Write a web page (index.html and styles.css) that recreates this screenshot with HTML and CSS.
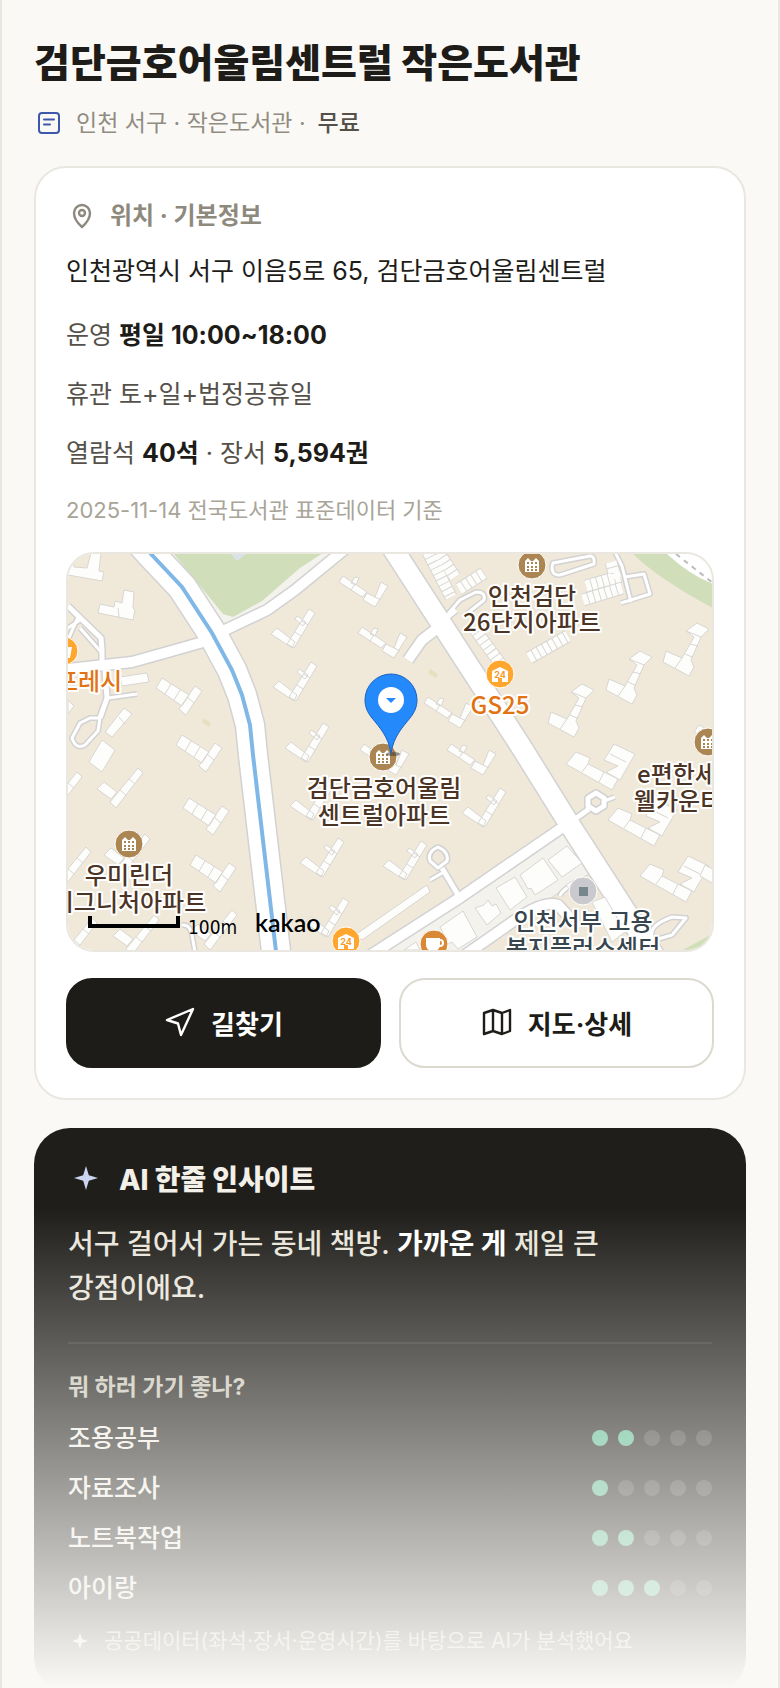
FILE: index.html
```
<!DOCTYPE html>
<html lang="ko">
<head>
    <meta charset="UTF-8">
    <meta name="viewport" content="width=device-width, initial-scale=1.0">
    <title>검단금호어울림센트럴 작은도서관</title>
    <link rel="stylesheet" href="styles.css">
</head>
<body>
    <main class="page">
        <header class="page-head">
            <h1>검단금호어울림센트럴 작은도서관</h1>
            <p class="sub">
                <svg class="icon-doc" viewBox="0 0 30 30" aria-hidden="true">
                    <rect x="5" y="5" width="20" height="20" rx="3"/>
                    <path d="M10 11.5H20M10 16.5H16"/>
                </svg>
                <span>인천 서구 · 작은도서관 · </span>
                <strong>무료</strong>
            </p>
        </header>

        <section class="card">
            <h2 class="card-title">
                <svg class="icon" viewBox="0 0 32 32" aria-hidden="true">
                    <path d="M16 27C12 23.5 8 18.5 8 13A8 8 0 0 1 24 13C24 18.5 20 23.5 16 27Z"/>
                    <circle cx="16" cy="13" r="3"/>
                </svg>
                위치 · 기본정보
            </h2>
            <p class="address">인천광역시 서구 이음5로 65, 검단금호어울림센트럴</p>
            <div class="info">
                <p>운영 <strong>평일 10:00~18:00</strong></p>
                <p>휴관 토+일+법정공휴일</p>
                <p>열람석 <strong>40석</strong> · 장서 <strong>5,594권</strong></p>
            </div>
            <p class="source">2025-11-14 전국도서관 표준데이터 기준</p>

            <div class="map">
                <svg viewBox="68 554 644 396" preserveAspectRatio="xMidYMid slice" role="img" aria-label="지도">
                    <defs>
                        <g id="apt-a">
                            <path d="M6 0L33 17L26 28L0 10ZM39 8L46 13L30 37L23 31Z"/>
                            <path d="M15 6L9 16M24 12L18 22M38 25L31 19"/>
                        </g>
                        <g id="apt-b">
                            <path d="M24 10L26 7L35 13L32 17ZM6 19L24 33L21 39L0 25ZM38 0L44 4L23 39L16 35Z"/>
                            <path d="M31 12L37 16M24 23L30 27"/>
                        </g>
                        <g id="apt-c">
                            <path d="M16 1L20 2L17 9L12 7ZM4 0L28 16L23 21L0 6ZM42 6L49 10L36 31L24 24L28 17L36 21Z"/>
                            <path d="M16 8L12 14M36 21L42 24"/>
                        </g>
                        <g id="apt-d">
                            <path d="M3 28L19 35L31 14L23 8L34 0L46 6L38 14L28 37L31 44L26 53L0 39Z"/>
                            <path d="M23 8L38 14M27 21L35 23M22 31L29 34M19 35L12 45"/>
                        </g>
                        <g id="apt-e">
                            <path d="M48 -8L69 2L54 28L40 20L52 14L38 8ZM10 0L24 6L22 12L38 20L52 27L46 38L0 12Z"/>
                            <path d="M22 12L16 20M38 20L33 30M44 2L60 10"/>
                        </g>
                        <g id="apt-f">
                            <path d="M7 14L20 24L14 31L0 21ZM41 0L46 5L19 40L13 34Z"/>
                            <path d="M32 11L38 16M23 22L29 27"/>
                        </g>
                        <g id="poi-apt">
                            <circle r="14" fill="#ab8552" stroke="#fff"/>
                            <path fill="#fff" d="M-7 7V-4L-4 -7L-1 -4H1L4 -7L7 -4V7Z"/>
                            <path stroke="#ab8552" stroke-width="2" stroke-dasharray="2 2" d="M-5 -2H6M-5 2H6M-5 5H6"/>
                        </g>
                        <g id="poi-store">
                            <circle r="14" fill="#ffa62e" stroke="#fff"/>
                            <path fill="#fff" d="M-8 -3L0 -7L8 -3V8H2V4H-2V8H-8Z"/>
                            <text class="store-no" y="4">24</text>
                        </g>

                        <g id="roads">
                            <path class="w28" d="M140 542L150 553L182 587L212 633L232 670L242 695L250 725L253 755L277 960"/>
                            <path class="w20" d="M384 535L397 555L520 745L568 822L657 960"/>
                            <path class="w10" d="M225 630L267 610L295 590L345 549M203 642L175 650L132 662L60 670"/>
                            <path class="w10" d="M566 825L461 897L366 958"/>
                            <path class="w10" d="M435 630L422 640L408 660M458 960L518 918Q545 900 558 905L570 918"/>
                            <path class="w5" d="M102 670V650L101 638L68 606M105 670L107 698L100 718M458 895L442 868M571 822L589 809M446 618L456 610"/>
                            <path class="w3" d="M68 628L80 620M78 617L68 640M80 628L102 653M108 698L137 694M430 880L444 872M604 801L615 797"/>
                            <path class="w3" d="M100 718H90L80 723L72 738Q76 750 85 745L98 731ZM448 614L460 600L476 592Q486 592 484 600L464 616M553 563L590 556Q595 556 594 564L560 575Q552 576 552 567ZM614 550L622 566L631 602M625 577L644 574L650 594L621 603M652 935Q650 925 672 917L686 918L672 935L655 940M182 925Q190 924 192 935L195 952M560 896Q562 888 584 880"/>
                            <path class="w5" d="M596 793L604 798V806L596 811L588 806V798Z"/>
                            <path class="w3" d="M438 847Q449 852 447 861L438 868L430 861Q427 852 438 847Z"/>
                        </g>
                    </defs>

                    <rect x="68" y="554" width="644" height="396" fill="#f0e9da"/>

                    <!-- green areas -->
                    <path fill="#f3f2ec" d="M170 553L223 622L230 622L266 604L333 553Z"/>
                    <path fill="#d0deba" d="M173 553L223 614L233 617L262 601L300 568L323 553Z"/>
                    <path fill="#dbe3ea" d="M230 553L237 561L247 553Z"/>
                    <path fill="#d0deba" d="M633 554H668L713 583V608Q660 580 633 554Z"/>
                    <path fill="#fff" d="M667 554H713V584Q690 575 667 554Z"/>
                    <path fill="none" stroke="#bbb" stroke-width="2" stroke-dasharray="5 5" d="M676 554L713 583"/>
                    <path fill="#d0deba" d="M683 950L712 934V950Z"/>
                    <path fill="#f4f2ec" stroke="#d8d6d0" d="M563 833L592 872L560 892L530 912L470 956H380Z"/>

                    <!-- roads: casing first, then surface -->
                    <use href="#roads" class="road-edge"/>
                    <use href="#roads" class="road"/>
                    <path class="river" d="M150 553L182 587L212 633L232 670L242 695L250 725L253 755L277 960"/>

                    <!-- buildings -->
                    <g class="buildings">
                        <path d="M91 553H101L99 571L104 572L102 581L68 575V563L73 564L74 567L87 568Z"/>
                        <path d="M124 590L134 592L133 608L135 610L133 620L98 613L100 604L114 607L115 601L122 603ZM118 608L119 617"/>
                        <path d="M120 677L147 673L149 682L122 686ZM124 708L132 714L112 737L105 732ZM119 717L125 724"/>
                        <path d="M102 740L115 750L102 772L89 762ZM68 700L74 706L68 714Z"/>
                        <use href="#apt-a" x="156" y="678"/>
                        <use href="#apt-a" x="176" y="735"/>
                        <use href="#apt-a" x="183" y="798"/>
                        <use href="#apt-a" x="190" y="855"/>
                        <use href="#apt-f" x="97" y="768"/>
                        <use href="#apt-f" x="36" y="772"/>
                        <use href="#apt-f" x="104" y="834"/>
                        <use href="#apt-f" x="45" y="847"/>
                        <use href="#apt-f" x="113" y="915"/>
                        <use href="#apt-f" x="51" y="918"/>
                        <use href="#apt-f" x="191" y="910"/>
                        <use href="#apt-b" x="271" y="609"/>
                        <use href="#apt-b" x="273" y="662"/>
                        <use href="#apt-b" x="285" y="723"/>
                        <use href="#apt-b" x="290" y="781"/>
                        <use href="#apt-b" x="300" y="838"/>
                        <use href="#apt-b" x="305" y="898"/>
                        <use href="#apt-b" x="462" y="788"/>
                        <use href="#apt-b" x="383" y="841"/>
                        <use href="#apt-c" x="339" y="576"/>
                        <use href="#apt-c" x="358" y="627"/>
                        <use href="#apt-c" x="424" y="697"/>
                        <use href="#apt-c" x="447" y="744"/>
                        <use href="#apt-c" x="360" y="744"/>
                        <use href="#apt-d" x="548" y="684"/>
                        <use href="#apt-d" x="606" y="651"/>
                        <use href="#apt-d" x="663" y="623"/>
                        <use href="#apt-e" x="566" y="752"/>
                        <use href="#apt-e" x="608" y="808"/>
                        <use href="#apt-e" x="640" y="864"/>
                        <path d="M699 725L712 732V742L694 732ZM705 865L714 870V884L700 876Z"/>
                        <path d="M548 860L567 846L582 863L562 877ZM520 875L543 858L558 880L535 895L531 888L528 889ZM496 888L515 877L527 897L510 910Z"/>
                        <path d="M475 908L484 905L488 900L492 906L496 904L501 913L487 925ZM440 927L463 911L477 937L458 949L452 942L448 944ZM404 950L416 942L420 950Z"/>
                        <path d="M355 935L427 885L430 892L362 940ZM592 902L605 897L625 932L612 942ZM566 885L574 880L590 898L582 905Z"/>
                    </g>

                    <!-- row houses -->
                    <g class="row-edge">
                        <path id="rows" d="M428 552L451 597M439 553L455 577M459 589L484 573M474 628L502 666M529 658L568 636M583 600L622 588M586 586L621 576M611 562L616 580"/>
                    </g>
                    <use href="#rows" class="row"/>
                    <path fill="#e8dfbf" d="M204 718L211 723L209 727L202 722ZM430 669L438 674L436 678L428 673Z"/>

                    <!-- places -->
                    <use href="#poi-apt" x="532" y="565"/>
                    <use href="#poi-apt" x="708" y="742"/>
                    <use href="#poi-apt" x="383" y="757"/>
                    <use href="#poi-apt" x="129" y="844"/>
                    <use href="#poi-store" x="500" y="674"/>
                    <use href="#poi-store" x="346" y="941"/>
                    <circle cx="64" cy="651" r="14" fill="#ffa62e" stroke="#fff"/>
                    <path fill="#fff" d="M62 647H72L70 658H62Z"/>
                    <circle cx="434" cy="944" r="14" fill="#d98835" stroke="#fff"/>
                    <path fill="#fff" d="M426 938H440V944Q440 951 433 951Q426 951 426 944Z"/>
                    <circle cx="440" cy="943" r="3" fill="none" stroke="#fff" stroke-width="2"/>
                    <circle cx="583" cy="891" r="14" fill="#c9c9ce" stroke="#fff"/>
                    <rect x="579" y="887" width="9" height="9" fill="#76868c"/>

                    <g class="label">
                        <text x="532" y="605">인천검단</text>
                        <text x="532" y="631">26단지아파트</text>
                        <text x="384" y="797">검단금호어울림</text>
                        <text x="384" y="824">센트럴아파트</text>
                        <text x="129" y="884">우미린더</text>
                        <text x="129" y="911">시그니처아파트</text>
                        <text x="688" y="783">e편한세상</text>
                        <text x="678" y="810">웰카운티</text>
                        <text class="orange" x="500" y="714">GS25</text>
                        <text class="orange" x="89" y="690">프레시</text>
                        <text class="slate" x="583" y="930">인천서부 고용</text>
                        <text class="slate" x="583" y="957">복지플러스센터</text>
                    </g>

                    <!-- current library pin -->
                    <ellipse cx="393" cy="754" rx="7" ry="2" fill="#333" opacity="0.5"/>
                    <path fill="#2489fb" stroke="#1b62c4" d="M391 753C388 736 380 728 372 718C367 712 365 706 365 700A26 26 0 0 1 417 700C417 706 415 712 410 718C402 728 394 736 391 753Z"/>
                    <circle cx="391" cy="700" r="13" fill="#fff"/>
                    <path fill="#2489fb" d="M386 698H396L391 703Z"/>

                    <path fill="none" stroke="#000" stroke-width="4" d="M90 916V926H178V916"/>
                    <text class="scale" x="188" y="934">100m</text>
                    <text class="brand" x="255" y="932">kakao</text>
                </svg>
            </div>

            <div class="actions">
                <button type="button" class="btn btn-dark">
                    <svg class="icon" viewBox="0 0 32 32" aria-hidden="true">
                        <path d="M29 3L17 29L14 17.5L3 14Z"/>
                    </svg>
                    길찾기
                </button>
                <button type="button" class="btn">
                    <svg class="icon" viewBox="0 0 32 32" aria-hidden="true">
                        <path d="M3 7L12 4L21 7L29 4V25L21 28L12 25L3 28ZM12 4V25M21 7V28"/>
                    </svg>
                    지도·상세
                </button>
            </div>
        </section>

        <section class="insight">
            <h2 class="insight-title">
                <svg viewBox="0 0 36 36" aria-hidden="true">
                    <path d="M18 4L20.8 13.2L30 16L20.8 18.8L18 28L15.2 18.8L6 16L15.2 13.2Z"/>
                </svg>
                AI 한줄 인사이트
            </h2>
            <p class="insight-text">서구 걸어서 가는 동네 책방. <strong>가까운 게</strong> 제일 큰 강점이에요.</p>

            <div class="scores">
                <h3>뭐 하러 가기 좋나?</h3>
                <ul>
                    <li>조용공부 <span class="dots"><i class="on"></i><i class="on"></i><i></i><i></i><i></i></span></li>
                    <li>자료조사 <span class="dots"><i class="on"></i><i></i><i></i><i></i><i></i></span></li>
                    <li>노트북작업 <span class="dots"><i class="on"></i><i class="on"></i><i></i><i></i><i></i></span></li>
                    <li>아이랑 <span class="dots"><i class="on"></i><i class="on"></i><i class="on"></i><i></i><i></i></span></li>
                </ul>
            </div>

            <p class="insight-foot">
                <svg viewBox="0 0 24 24" aria-hidden="true">
                    <path d="M12 4L14 10L20 12L14 14L12 20L10 14L4 12L10 10Z"/>
                </svg>
                공공데이터(좌석·장서·운영시간)를 바탕으로 AI가 분석했어요
            </p>
        </section>
        <div class="fade"></div>
    </main>
</body>
</html>
```

FILE: styles.css
```
* {
    box-sizing: border-box;
    margin: 0;
    padding: 0;
}

body {
    background: #faf9f6;
    color: #1d1c18;
    font-family: 'Inter', 'Noto Sans CJK KR', sans-serif;
    font-size: 25px;
    line-height: 36px;
    word-break: keep-all;
}

.page {
    position: relative;
    height: 100vh;
    overflow: hidden;
    padding: 37px 32px 0;
    border-left: 2px solid #e9e7e0;
    border-right: 2px solid #e9e7e0;
}

h1 {
    font-size: 39px;
    line-height: 52px;
    font-weight: 800;
}

.sub {
    display: flex;
    align-items: center;
    gap: 12px;
    margin: 16px 0 25px;
    font-size: 23px;
    color: #918c81;
}

.sub strong {
    font-weight: 500;
    color: #55514a;
}

.icon-doc {
    width: 30px;
    height: 30px;
    fill: none;
    stroke: #3d58ab;
    stroke-width: 2;
    stroke-linecap: round;
}

.icon {
    width: 32px;
    height: 32px;
    fill: none;
    stroke: currentColor;
    stroke-width: 2.4;
    stroke-linejoin: round;
    stroke-linecap: round;
}

/* location card */
.card {
    padding: 30px;
    background: #fff;
    border: 2px solid #e9e7e0;
    border-radius: 32px;
}

.card-title {
    display: flex;
    align-items: center;
    gap: 12px;
    font-size: 24px;
    font-weight: 700;
    color: #8e897d;
}

.address {
    margin: 17px 0 26px;
    font-size: 25px;
    line-height: 40px;
}

.info {
    display: flex;
    flex-direction: column;
    gap: 23px;
    color: #55514a;
}

.info strong {
    font-weight: 700;
    color: #1d1c18;
}

.source {
    margin: 21px 0 24px;
    font-size: 22px;
    color: #a8a498;
}

/* map */
.map {
    overflow: hidden;
    border: 2px solid #e9e7e0;
    border-radius: 28px;
}

.map svg {
    display: block;
    width: 100%;
    height: 396px;
}

.road-edge,
.road {
    fill: none;
    stroke: #fff;
    stroke-linejoin: round;
    --casing: 0px;
}

.road-edge {
    stroke: #d2d2d2;
    --casing: 3px;
}

.w28 { stroke-width: calc(28px + var(--casing)); }
.w20 { stroke-width: calc(20px + var(--casing)); }
.w10 { stroke-width: calc(10px + var(--casing)); }
.w5 { stroke-width: calc(5px + var(--casing)); }
.w3 { stroke-width: calc(3px + var(--casing)); }

.river {
    fill: none;
    stroke: #7fb8e6;
    stroke-width: 4;
}

.buildings {
    fill: #fdfdfb;
    stroke: #d8d6d2;
}

.row-edge {
    fill: none;
    stroke: #d8d6d2;
    stroke-width: 13;
}

.row {
    fill: none;
    stroke: #fdfdfb;
    stroke-width: 11;
    stroke-dasharray: 5 1;
}

.label text {
    font-family: 'Noto Sans CJK KR', sans-serif;
    font-size: 24px;
    font-weight: 500;
    text-anchor: middle;
    fill: #4c3424;
    stroke: #fff;
    stroke-width: 4;
    stroke-linejoin: round;
    paint-order: stroke;
}

.label .orange {
    fill: #e27312;
}

.label .slate {
    fill: #37454e;
}

.store-no {
    font-size: 9px;
    font-weight: 700;
    text-anchor: middle;
    fill: #f39b24;
}

.scale {
    font-family: 'DejaVu Sans Condensed', 'DejaVu Sans', sans-serif;
    font-size: 19px;
}

.brand {
    font-family: 'Lato', sans-serif;
    font-size: 25px;
    font-weight: 600;
}

/* buttons */
.actions {
    display: grid;
    grid-template-columns: 1fr 1fr;
    gap: 18px;
    margin-top: 26px;
}

.btn {
    display: flex;
    align-items: center;
    justify-content: center;
    gap: 15px;
    height: 90px;
    padding-bottom: 2px;
    border: 2px solid #dcd9d0;
    border-radius: 26px;
    background: #fff;
    color: #1d1c18;
    font-family: inherit;
    font-size: 26px;
    font-weight: 700;
    cursor: pointer;
}

.btn-dark {
    background: #1d1c18;
    border-color: #1d1c18;
    color: #fff;
}

/* insight card */
.insight {
    margin-top: 28px;
    padding: 34px;
    border-radius: 36px;
    background: #1f1e1a;
    color: #f3f0e9;
}

.insight-title {
    display: flex;
    align-items: center;
    gap: 15px;
    font-size: 28px;
    font-weight: 800;
}

.insight-title svg {
    width: 36px;
    height: 36px;
    fill: #cbd5f2;
}

.insight-text {
    margin: 24px 0 32px;
    font-size: 28px;
    line-height: 44px;
    font-weight: 500;
    color: #e9e5db;
}

.insight-text strong {
    font-weight: 700;
    color: #fff;
}

.scores {
    padding-top: 25px;
    border-top: 2px solid rgba(255, 255, 255, 0.08);
}

.scores h3 {
    margin-bottom: 8px;
    font-size: 23px;
    font-weight: 700;
    color: #c9c5b8;
}

.scores ul {
    list-style: none;
}

.scores li {
    display: flex;
    align-items: center;
    justify-content: space-between;
    line-height: 50px;
    font-weight: 500;
}

.dots {
    display: flex;
    gap: 10px;
}

.dots i {
    width: 16px;
    height: 16px;
    border-radius: 50%;
    background: rgba(255, 255, 255, 0.15);
}

.dots .on {
    background: #5bba90;
}

.insight-foot {
    display: flex;
    align-items: center;
    gap: 12px;
    margin-top: 10px;
    font-size: 21px;
    color: #c9c5b8;
}

.insight-foot svg {
    width: 24px;
    height: 24px;
    fill: #f3f0e9;
}

/* fades the lower part of the page out */
.fade {
    position: absolute;
    left: -2px;
    right: -2px;
    bottom: 0;
    height: 480px;
    background: linear-gradient(to bottom, rgba(250, 249, 246, 0), #faf9f6);
    pointer-events: none;
}
```
